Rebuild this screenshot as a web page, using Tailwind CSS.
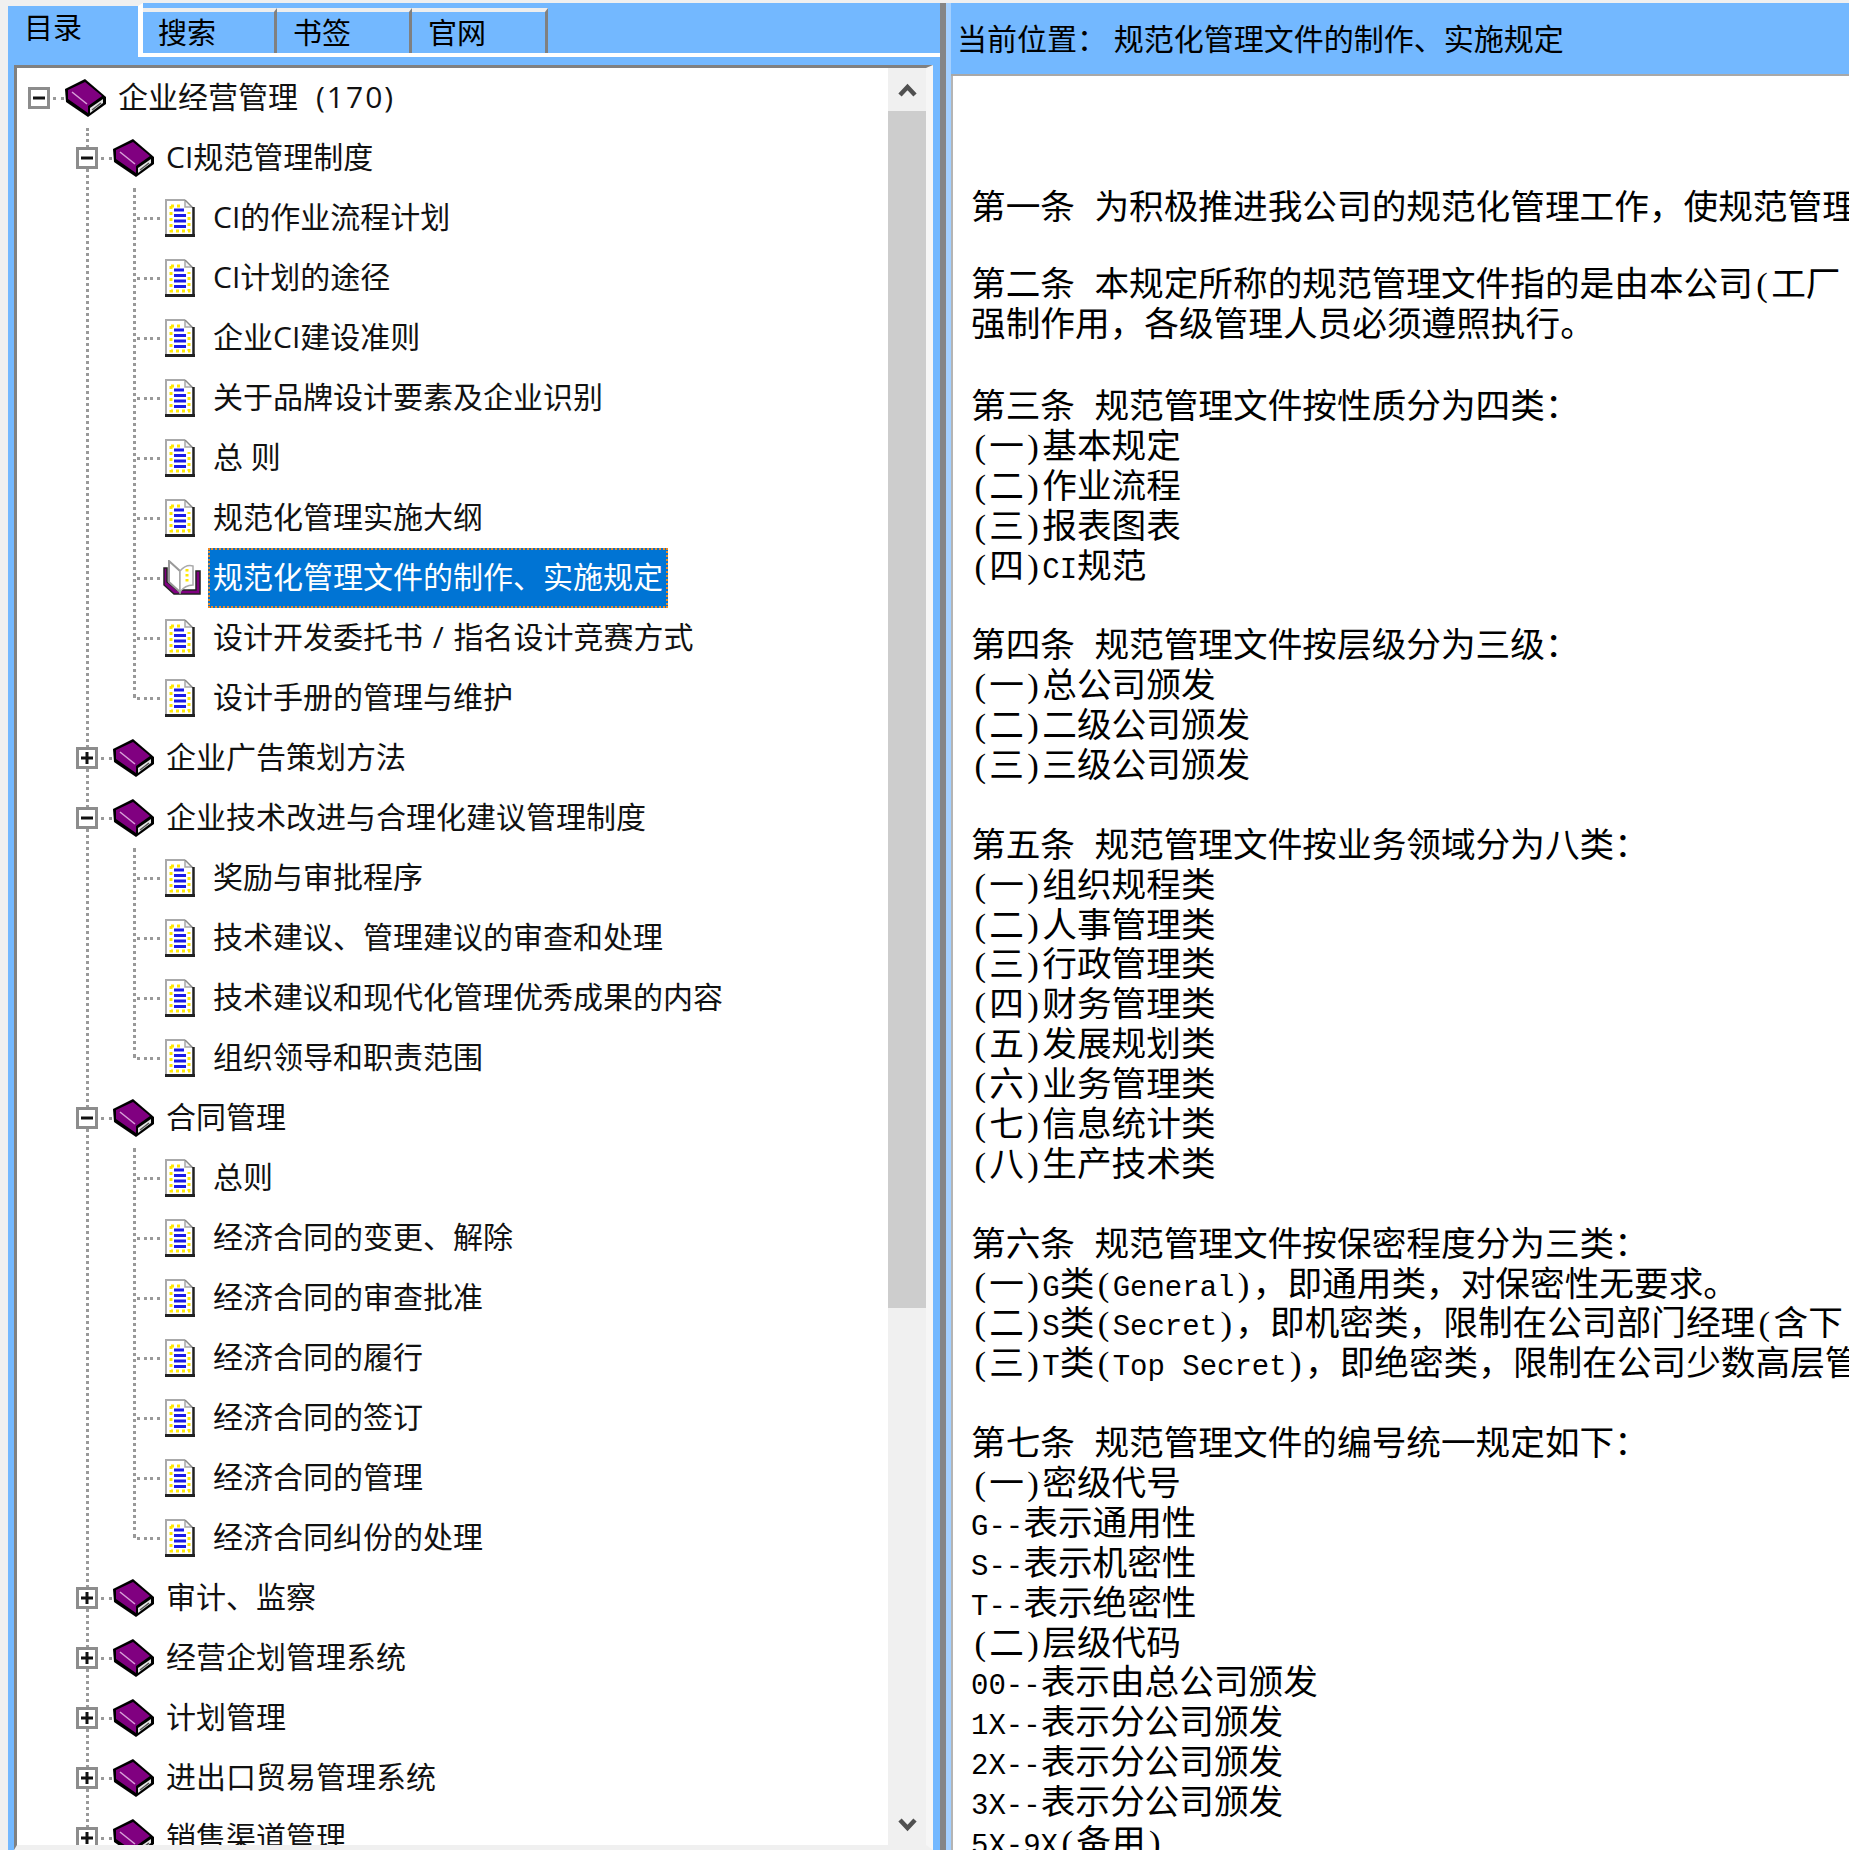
<!DOCTYPE html>
<html lang="zh-CN">
<head>
<meta charset="utf-8">
<script src="https://cdn.jsdelivr.net/npm/@tailwindcss/browser@4"></script>
</head>
<body class="m-0 overflow-hidden bg-[#f0f0f0]">
<svg class="hidden">
<symbol id="book" viewBox="0 0 41 38">
<path d="M20 0 L41 18 L41 25 L23 38 L1 23 L0 10 Z" fill="#000"/>
<path d="M20 3 L37 17 L23 27 L23 34 L3 20 L3 11 Z" fill="#800080"/>
<path d="M25 29 L38 20 L38 24 L25 34 Z" fill="#e4e4e4"/>
<path d="M27 31 L36 24" stroke="#555" stroke-width="1.5"/>
<path d="M7 13 L22 25" stroke="#d8a0d8" stroke-width="1.5"/>
</symbol>
<symbol id="doc" viewBox="0 0 30 38">
<path d="M1 1 H20 L29 9 V37 H1 Z" fill="#fff"/>
<path d="M1 36 V1 H20" fill="none" stroke="#aaa" stroke-width="2"/>
<path d="M20 1 V8 H27" fill="#f4f4f4" stroke="#aaa" stroke-width="1.5"/>
<path d="M20 1 L28 9" stroke="#888" stroke-width="1.5"/>
<path d="M0 36.5 H30" stroke="#222" stroke-width="3"/>
<path d="M28.5 8 V37" stroke="#222" stroke-width="2.5"/>
<path d="M6 7 V32 H24 V13 M6 7 H15" fill="none" stroke="#ffe800" stroke-width="3" stroke-dasharray="3 3"/>
<path d="M9 11 H19 M9 16.5 H21 M9 22 H21 M9 27.5 H21" stroke="#1c1ce8" stroke-width="3"/>
</symbol>
<symbol id="open" viewBox="0 0 38 36">
<path d="M1 8 V25 L11 34 H37 V11 H33 V30 H14 L4 22 V8 Z" fill="#800080" stroke="#222" stroke-width="1.5"/>
<path d="M6 1 L17 11 V32 L6 22 Z" fill="#fff" stroke="#999" stroke-width="2"/>
<path d="M17 11 Q23 4 30 6 V25 Q22 25 17 32 Z" fill="#fff" stroke="#aaa" stroke-width="1.5"/>
<path d="M24 9 V24" stroke="#ffe800" stroke-width="3" stroke-dasharray="2.5 2.5"/>
</symbol>
<symbol id="minus" viewBox="0 0 22 22">
<rect x="1.5" y="1.5" width="19" height="19" fill="#fff" stroke="#8c8c8c" stroke-width="3"/>
<path d="M5 11 H17" stroke="#111" stroke-width="3"/>
</symbol>
<symbol id="plus" viewBox="0 0 22 22">
<rect x="1.5" y="1.5" width="19" height="19" fill="#fff" stroke="#8c8c8c" stroke-width="3"/>
<path d="M5 11 H17 M11 5 V17" stroke="#111" stroke-width="3"/>
</symbol>
</svg>

<div class="flex h-[1850px] w-[1849px] overflow-hidden bg-[#f0f0f0] pt-[3px] text-black font-['Open_Sans','Noto_Sans_CJK_SC',sans-serif]">

  <!-- left pane -->
  <div class="flex w-[940px] shrink-0 flex-col pl-[8px]">
    <div class="flex h-[50px] shrink-0 bg-[#73b8ff] text-[29px] leading-[40px]">
      <div class="relative z-10 mb-[-4px] h-[54px] w-[135px] border-r-[5px] border-t-[3px] border-r-white border-t-[#f0f0f0] bg-[#73b8ff] pl-[16px] pt-[2px]">目录</div>
      <div class="mt-[5px] h-[45px] w-[134px] border-r-[3px] border-t-[4px] border-r-[#808080] border-t-[#eeeeee] pl-[15px] pt-[1px]">搜索</div>
      <div class="mt-[5px] h-[45px] w-[135px] border-r-[3px] border-t-[4px] border-r-[#808080] border-t-[#eeeeee] pl-[16px] pt-[1px]">书签</div>
      <div class="mt-[5px] h-[45px] w-[136px] border-r-[3px] border-t-[4px] border-r-[#808080] border-t-[#eeeeee] pl-[16px] pt-[1px]">官网</div>
    </div>
    <div class="flex min-h-0 flex-1 border-t-[4px] border-white bg-[#73b8ff] pl-[6px] pr-[7px] pt-[8px]">
      <div class="flex min-h-0 min-w-0 flex-1 border-b-[5px] border-l-[3px] border-r-[7px] border-t-[3px] border-b-[#f0f0f0] border-l-[#808080] border-r-[#f6f6f6] border-t-[#808080] bg-white">

        <!-- tree -->
        <div class="relative min-w-0 flex-1 overflow-hidden text-[30px] leading-[40px] text-[#111] [&_span]:mb-[2px]">
          <div class="absolute bottom-0 left-[69px] top-[60px] border-l-[3px] border-dotted border-[#999]"></div>

          <div class="flex h-[60px] items-center pl-[11px]"><svg class="relative z-10 h-[22px] w-[22px] shrink-0"><use href="#minus"/></svg><i class="ml-[3px] mr-[1px] w-[11px] border-t-[3px] border-dotted border-[#999]"></i><svg class="mr-[12px] h-[38px] w-[41px] shrink-0"><use href="#book"/></svg><span>企业经营管理<a class="ml-[18px] tracking-[2px]">(170)</a></span></div>

          <div class="flex h-[60px] items-center pl-[59px]"><svg class="relative z-10 h-[22px] w-[22px] shrink-0"><use href="#minus"/></svg><i class="ml-[3px] mr-[1px] w-[11px] border-t-[3px] border-dotted border-[#999]"></i><svg class="mr-[12px] h-[38px] w-[41px] shrink-0"><use href="#book"/></svg><span>CI规范管理制度</span></div>
          <div class="relative">
            <div class="absolute bottom-[30px] left-[116px] top-0 border-l-[3px] border-dotted border-[#999]"></div>
            <div class="flex h-[60px] items-center pl-[120px]"><i class="mr-[5px] w-[23px] border-t-[3px] border-dotted border-[#999]"></i><svg class="mr-[18px] h-[38px] w-[30px] shrink-0"><use href="#doc"/></svg><span>CI的作业流程计划</span></div>
            <div class="flex h-[60px] items-center pl-[120px]"><i class="mr-[5px] w-[23px] border-t-[3px] border-dotted border-[#999]"></i><svg class="mr-[18px] h-[38px] w-[30px] shrink-0"><use href="#doc"/></svg><span>CI计划的途径</span></div>
            <div class="flex h-[60px] items-center pl-[120px]"><i class="mr-[5px] w-[23px] border-t-[3px] border-dotted border-[#999]"></i><svg class="mr-[18px] h-[38px] w-[30px] shrink-0"><use href="#doc"/></svg><span>企业CI建设准则</span></div>
            <div class="flex h-[60px] items-center pl-[120px]"><i class="mr-[5px] w-[23px] border-t-[3px] border-dotted border-[#999]"></i><svg class="mr-[18px] h-[38px] w-[30px] shrink-0"><use href="#doc"/></svg><span>关于品牌设计要素及企业识别</span></div>
            <div class="flex h-[60px] items-center pl-[120px]"><i class="mr-[5px] w-[23px] border-t-[3px] border-dotted border-[#999]"></i><svg class="mr-[18px] h-[38px] w-[30px] shrink-0"><use href="#doc"/></svg><span>总 则</span></div>
            <div class="flex h-[60px] items-center pl-[120px]"><i class="mr-[5px] w-[23px] border-t-[3px] border-dotted border-[#999]"></i><svg class="mr-[18px] h-[38px] w-[30px] shrink-0"><use href="#doc"/></svg><span>规范化管理实施大纲</span></div>
            <div class="flex h-[60px] items-center pl-[120px]"><i class="mr-[3px] w-[23px] border-t-[3px] border-dotted border-[#999]"></i><svg class="mr-[7px] h-[36px] w-[38px] shrink-0"><use href="#open"/></svg><span class="!mb-0 flex h-[60px] items-center border-2 border-dotted border-[#f08a24] bg-[#0074d4] pb-[2px] pl-[3px] pr-[3px] text-white">规范化管理文件的制作、实施规定</span></div>
            <div class="flex h-[60px] items-center pl-[120px]"><i class="mr-[5px] w-[23px] border-t-[3px] border-dotted border-[#999]"></i><svg class="mr-[18px] h-[38px] w-[30px] shrink-0"><use href="#doc"/></svg><span>设计开发委托书<a class="mx-[2px]"> / </a>指名设计竞赛方式</span></div>
            <div class="flex h-[60px] items-center pl-[120px]"><i class="mr-[5px] w-[23px] border-t-[3px] border-dotted border-[#999]"></i><svg class="mr-[18px] h-[38px] w-[30px] shrink-0"><use href="#doc"/></svg><span>设计手册的管理与维护</span></div>
          </div>

          <div class="flex h-[60px] items-center pl-[59px]"><svg class="relative z-10 h-[22px] w-[22px] shrink-0"><use href="#plus"/></svg><i class="ml-[3px] mr-[1px] w-[11px] border-t-[3px] border-dotted border-[#999]"></i><svg class="mr-[12px] h-[38px] w-[41px] shrink-0"><use href="#book"/></svg><span>企业广告策划方法</span></div>

          <div class="flex h-[60px] items-center pl-[59px]"><svg class="relative z-10 h-[22px] w-[22px] shrink-0"><use href="#minus"/></svg><i class="ml-[3px] mr-[1px] w-[11px] border-t-[3px] border-dotted border-[#999]"></i><svg class="mr-[12px] h-[38px] w-[41px] shrink-0"><use href="#book"/></svg><span>企业技术改进与合理化建议管理制度</span></div>
          <div class="relative">
            <div class="absolute bottom-[30px] left-[116px] top-0 border-l-[3px] border-dotted border-[#999]"></div>
            <div class="flex h-[60px] items-center pl-[120px]"><i class="mr-[5px] w-[23px] border-t-[3px] border-dotted border-[#999]"></i><svg class="mr-[18px] h-[38px] w-[30px] shrink-0"><use href="#doc"/></svg><span>奖励与审批程序</span></div>
            <div class="flex h-[60px] items-center pl-[120px]"><i class="mr-[5px] w-[23px] border-t-[3px] border-dotted border-[#999]"></i><svg class="mr-[18px] h-[38px] w-[30px] shrink-0"><use href="#doc"/></svg><span>技术建议、管理建议的审查和处理</span></div>
            <div class="flex h-[60px] items-center pl-[120px]"><i class="mr-[5px] w-[23px] border-t-[3px] border-dotted border-[#999]"></i><svg class="mr-[18px] h-[38px] w-[30px] shrink-0"><use href="#doc"/></svg><span>技术建议和现代化管理优秀成果的内容</span></div>
            <div class="flex h-[60px] items-center pl-[120px]"><i class="mr-[5px] w-[23px] border-t-[3px] border-dotted border-[#999]"></i><svg class="mr-[18px] h-[38px] w-[30px] shrink-0"><use href="#doc"/></svg><span>组织领导和职责范围</span></div>
          </div>

          <div class="flex h-[60px] items-center pl-[59px]"><svg class="relative z-10 h-[22px] w-[22px] shrink-0"><use href="#minus"/></svg><i class="ml-[3px] mr-[1px] w-[11px] border-t-[3px] border-dotted border-[#999]"></i><svg class="mr-[12px] h-[38px] w-[41px] shrink-0"><use href="#book"/></svg><span>合同管理</span></div>
          <div class="relative">
            <div class="absolute bottom-[30px] left-[116px] top-0 border-l-[3px] border-dotted border-[#999]"></div>
            <div class="flex h-[60px] items-center pl-[120px]"><i class="mr-[5px] w-[23px] border-t-[3px] border-dotted border-[#999]"></i><svg class="mr-[18px] h-[38px] w-[30px] shrink-0"><use href="#doc"/></svg><span>总则</span></div>
            <div class="flex h-[60px] items-center pl-[120px]"><i class="mr-[5px] w-[23px] border-t-[3px] border-dotted border-[#999]"></i><svg class="mr-[18px] h-[38px] w-[30px] shrink-0"><use href="#doc"/></svg><span>经济合同的变更、解除</span></div>
            <div class="flex h-[60px] items-center pl-[120px]"><i class="mr-[5px] w-[23px] border-t-[3px] border-dotted border-[#999]"></i><svg class="mr-[18px] h-[38px] w-[30px] shrink-0"><use href="#doc"/></svg><span>经济合同的审查批准</span></div>
            <div class="flex h-[60px] items-center pl-[120px]"><i class="mr-[5px] w-[23px] border-t-[3px] border-dotted border-[#999]"></i><svg class="mr-[18px] h-[38px] w-[30px] shrink-0"><use href="#doc"/></svg><span>经济合同的履行</span></div>
            <div class="flex h-[60px] items-center pl-[120px]"><i class="mr-[5px] w-[23px] border-t-[3px] border-dotted border-[#999]"></i><svg class="mr-[18px] h-[38px] w-[30px] shrink-0"><use href="#doc"/></svg><span>经济合同的签订</span></div>
            <div class="flex h-[60px] items-center pl-[120px]"><i class="mr-[5px] w-[23px] border-t-[3px] border-dotted border-[#999]"></i><svg class="mr-[18px] h-[38px] w-[30px] shrink-0"><use href="#doc"/></svg><span>经济合同的管理</span></div>
            <div class="flex h-[60px] items-center pl-[120px]"><i class="mr-[5px] w-[23px] border-t-[3px] border-dotted border-[#999]"></i><svg class="mr-[18px] h-[38px] w-[30px] shrink-0"><use href="#doc"/></svg><span>经济合同纠份的处理</span></div>
          </div>

          <div class="flex h-[60px] items-center pl-[59px]"><svg class="relative z-10 h-[22px] w-[22px] shrink-0"><use href="#plus"/></svg><i class="ml-[3px] mr-[1px] w-[11px] border-t-[3px] border-dotted border-[#999]"></i><svg class="mr-[12px] h-[38px] w-[41px] shrink-0"><use href="#book"/></svg><span>审计、监察</span></div>
          <div class="flex h-[60px] items-center pl-[59px]"><svg class="relative z-10 h-[22px] w-[22px] shrink-0"><use href="#plus"/></svg><i class="ml-[3px] mr-[1px] w-[11px] border-t-[3px] border-dotted border-[#999]"></i><svg class="mr-[12px] h-[38px] w-[41px] shrink-0"><use href="#book"/></svg><span>经营企划管理系统</span></div>
          <div class="flex h-[60px] items-center pl-[59px]"><svg class="relative z-10 h-[22px] w-[22px] shrink-0"><use href="#plus"/></svg><i class="ml-[3px] mr-[1px] w-[11px] border-t-[3px] border-dotted border-[#999]"></i><svg class="mr-[12px] h-[38px] w-[41px] shrink-0"><use href="#book"/></svg><span>计划管理</span></div>
          <div class="flex h-[60px] items-center pl-[59px]"><svg class="relative z-10 h-[22px] w-[22px] shrink-0"><use href="#plus"/></svg><i class="ml-[3px] mr-[1px] w-[11px] border-t-[3px] border-dotted border-[#999]"></i><svg class="mr-[12px] h-[38px] w-[41px] shrink-0"><use href="#book"/></svg><span>进出口贸易管理系统</span></div>
          <div class="flex h-[60px] items-center pl-[59px]"><svg class="relative z-10 h-[22px] w-[22px] shrink-0"><use href="#plus"/></svg><i class="ml-[3px] mr-[1px] w-[11px] border-t-[3px] border-dotted border-[#999]"></i><svg class="mr-[12px] h-[38px] w-[41px] shrink-0"><use href="#book"/></svg><span>销售渠道管理</span></div>
        </div>

        <!-- scrollbar -->
        <div class="flex w-[38px] shrink-0 flex-col bg-[#f0f0f0]">
          <div class="flex h-[43px] shrink-0 items-center justify-center"><svg class="h-[15px] w-[19px]" viewBox="0 0 19 15"><path d="M2 13 L9.5 5 L17 13" fill="none" stroke="#505050" stroke-width="4.5"/></svg></div>
          <div class="h-[1197px] shrink-0 bg-[#cdcdcd]"></div>
          <div class="flex flex-1 items-end justify-center pb-[12px]"><svg class="h-[15px] w-[19px]" viewBox="0 0 19 15"><path d="M2 2 L9.5 10 L17 2" fill="none" stroke="#505050" stroke-width="4.5"/></svg></div>
        </div>
      </div>
    </div>
  </div>

  <!-- splitter -->
  <div class="w-[6px] shrink-0 bg-[#858585]"></div>
  <div class="w-[5px] shrink-0 bg-[#a4d0ff]"></div>

  <!-- right pane -->
  <div class="flex min-w-0 flex-1 flex-col">
    <div class="flex h-[73px] shrink-0 items-center border-b-2 border-[#a8a8a8] bg-[#73b8ff] pb-[2px] pl-[6px] text-[30px] whitespace-nowrap font-['Noto_Sans_CJK_SC',sans-serif]">当前位置： 规范化管理文件的制作、实施规定</div>
    <div class="min-h-0 flex-1 overflow-hidden border-l-2 border-[#b4b4b4] bg-white pl-[18px] pt-[109px] text-[34.67px] leading-[39.9px] whitespace-nowrap font-['Noto_Sans_CJK_SC',sans-serif] [&_b]:whitespace-pre [&_b]:font-['Liberation_Mono',monospace] [&_b]:text-[29px] [&_b]:font-normal [&_em]:inline-block [&_em]:w-[18.3px] [&_em]:text-center [&_em]:font-['Liberation_Serif',serif] [&_em]:font-normal [&_em]:not-italic [&>div]:h-[39.9px]">
      <div>第一条<b class="pr-[2px]"> </b>为积极推进我公司的规范化管理工作，使规范管理</div>
      <div class="mt-[-3px]"></div>
      <div>第二条<b class="pr-[2px]"> </b>本规定所称的规范管理文件指的是由本公司<em>(</em>工厂</div>
      <div>强制作用，各级管理人员必须遵照执行。</div>
      <div class="mb-[2.5px]"></div>
      <div>第三条<b class="pr-[2px]"> </b>规范管理文件按性质分为四类：</div>
      <div><em>(</em>一<em>)</em>基本规定</div>
      <div><em>(</em>二<em>)</em>作业流程</div>
      <div><em>(</em>三<em>)</em>报表图表</div>
      <div><em>(</em>四<em>)</em><b>CI</b>规范</div>
      <div></div>
      <div>第四条<b class="pr-[2px]"> </b>规范管理文件按层级分为三级：</div>
      <div><em>(</em>一<em>)</em>总公司颁发</div>
      <div><em>(</em>二<em>)</em>二级公司颁发</div>
      <div><em>(</em>三<em>)</em>三级公司颁发</div>
      <div></div>
      <div>第五条<b class="pr-[2px]"> </b>规范管理文件按业务领域分为八类：</div>
      <div><em>(</em>一<em>)</em>组织规程类</div>
      <div><em>(</em>二<em>)</em>人事管理类</div>
      <div><em>(</em>三<em>)</em>行政管理类</div>
      <div><em>(</em>四<em>)</em>财务管理类</div>
      <div><em>(</em>五<em>)</em>发展规划类</div>
      <div><em>(</em>六<em>)</em>业务管理类</div>
      <div><em>(</em>七<em>)</em>信息统计类</div>
      <div><em>(</em>八<em>)</em>生产技术类</div>
      <div></div>
      <div>第六条<b class="pr-[2px]"> </b>规范管理文件按保密程度分为三类：</div>
      <div><em>(</em>一<em>)</em><b>G</b>类<em>(</em><b>General</b><em>)</em>，即通用类，对保密性无要求。</div>
      <div><em>(</em>二<em>)</em><b>S</b>类<em>(</em><b>Secret</b><em>)</em>，即机密类，限制在公司部门经理<em>(</em>含下</div>
      <div><em>(</em>三<em>)</em><b>T</b>类<em>(</em><b>Top Secret</b><em>)</em>，即绝密类，限制在公司少数高层管</div>
      <div></div>
      <div>第七条<b class="pr-[2px]"> </b>规范管理文件的编号统一规定如下：</div>
      <div><em>(</em>一<em>)</em>密级代号</div>
      <div><b>G--</b>表示通用性</div>
      <div><b>S--</b>表示机密性</div>
      <div><b>T--</b>表示绝密性</div>
      <div><em>(</em>二<em>)</em>层级代码</div>
      <div><b>00--</b>表示由总公司颁发</div>
      <div><b>1X--</b>表示分公司颁发</div>
      <div><b>2X--</b>表示分公司颁发</div>
      <div><b>3X--</b>表示分公司颁发</div>
      <div><b>5X-9X</b><em>(</em>备用<em>)</em></div>
    </div>
  </div>
</div>
</body>
</html>
